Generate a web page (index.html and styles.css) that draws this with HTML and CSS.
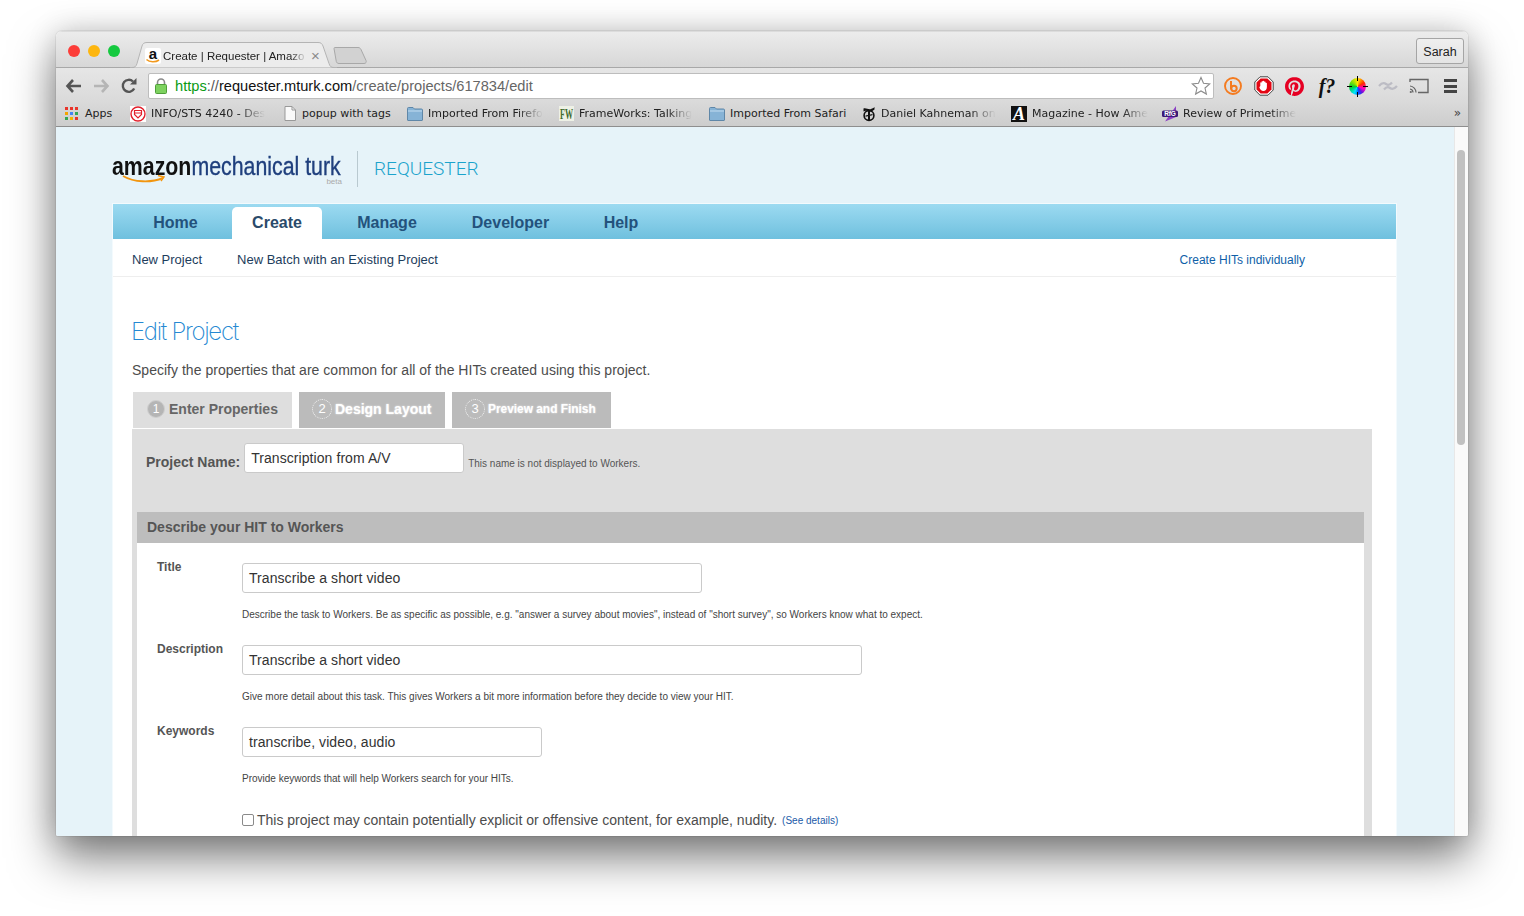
FILE: index.html
```html
<!DOCTYPE html>
<html lang="en">
<head>
<meta charset="utf-8">
<title>Create | Requester | Amazon Mechanical Turk</title>
<link rel="stylesheet" href="styles.css">
</head>
<body>
<div class="window">
  <div class="tabstrip">
    <div class="lights"><i class="light red"></i><i class="light yellow"></i><i class="light green"></i></div>
    <div class="tab">
      <svg class="tab-shape" width="207" height="26" viewBox="0 0 207 26"><path d="M0 25.500h2c3 0 4-1 5-4L12 4c.7-2.400 2-3.500 5-3.500h171c3 0 4 1.100 5 3.500l6 17.500c1 3 2 4 5 4h3" fill="#ececec" stroke="#b4b4b4"/></svg>
      <svg class="favicon" width="16" height="16" viewBox="0 0 16 16"><rect width="16" height="16" rx="2" fill="#fff"/><text x="8" y="11" class="fav-a">a</text><path d="M1.500 11.500c3 2.800 9 3 12.500 .5" fill="none" stroke="#f29a1f" stroke-width="1.600"/></svg>
      <span class="tab-title">Create | Requester | Amazo</span>
      <span class="tab-close">×</span>
    </div>
    <svg class="newtab" width="34" height="17" viewBox="0 0 34 17"><path d="M1 1.500c0-.6.400-1 1-1h23c1.500 0 2.300.7 3 2l5 11c.6 1.500 0 3-2 3H6c-1.500 0-2.300-.7-2.700-2z" fill="#d2d2d2" stroke="#a8a8a8"/></svg>
    <div class="profile">Sarah</div>
  </div>

  <div class="toolbar">
    <svg class="nav-icon nav-back" width="18" height="16" viewBox="0 0 18 16"><path d="M8 2 2.500 8 8 14M3 8h13" fill="none" stroke="#555" stroke-width="2.600"/></svg>
    <svg class="nav-icon" width="18" height="16" viewBox="0 0 18 16"><path d="M10 2l5.500 6-5.500 6M15 8H2" fill="none" stroke="#b5b5b5" stroke-width="2.600"/></svg>
    <svg class="nav-icon" width="18" height="18" viewBox="0 0 18 18"><path d="M14.200 11.500A6 6 0 1 1 13 4.500" fill="none" stroke="#555" stroke-width="2.400"/><path d="M10 7.500h6.500V1z" fill="#555"/></svg>
    <div class="omnibox">
      <svg class="lock" width="14" height="16" viewBox="0 0 14 16"><path d="M3.500 7V4.500a3.500 3.500 0 0 1 7 0V7" fill="none" stroke="#8a8a8a" stroke-width="1.600"/><rect x="1.500" y="6.500" width="11" height="9" rx="1" fill="#7dd25f" stroke="#4f9e3a"/></svg>
      <span class="url"><span class="scheme">https</span><span class="sep">://</span><span class="host">requester.mturk.com</span><span class="path">/create/projects/617834/edit</span></span>
      <svg class="star" width="20" height="20" viewBox="0 0 20 20"><path d="M10 1.500l2.500 5.800 6.200.6-4.700 4.100 1.400 6.100L10 15l-5.400 3.100 1.400-6.100-4.700-4.100 6.200-.6z" fill="#fff" stroke="#8c8c8c" stroke-width="1.100"/></svg>
    </div>
    <div class="ext-icons">
      <svg width="20" height="20" viewBox="0 0 20 20"><circle cx="10" cy="10" r="8" fill="none" stroke="#f47b20" stroke-width="1.900"/><path d="M8 5v8.500" stroke="#f47b20" stroke-width="2"/><circle cx="11" cy="12.500" r="2.700" fill="none" stroke="#f47b20" stroke-width="2"/></svg>
      <svg width="20" height="20" viewBox="0 0 20 20"><path d="M6 .8h8L19.200 6v8L14 19.200H6L.8 14V6z" fill="#fff" stroke="#444"/><path d="M6.600 2.500h6.800l4.100 4.100v6.800l-4.100 4.100H6.600l-4.100-4.100V6.600z" fill="#e30613"/><path d="M6.300 10V6.800c0-.8 1.300-.8 1.300 0V5.700c0-.8 1.300-.8 1.300 0v-.3c0-.8 1.400-.8 1.400 0v.6c0-.8 1.300-.8 1.300 0v1.300c0-.8 1.300-.8 1.300 0V11c0 2.600-1.500 4-3.600 4-1.900 0-2.900-1-4-3.700z" fill="#fff"/></svg>
      <svg width="19" height="19" viewBox="0 0 24 24"><path fill="#e60023" d="M12.017 0C5.396 0 .029 5.367.029 11.987c0 5.079 3.158 9.417 7.618 11.162-.105-.949-.199-2.403.041-3.439.219-.937 1.406-5.957 1.406-5.957s-.359-.72-.359-1.781c0-1.663.967-2.911 2.168-2.911 1.024 0 1.518.769 1.518 1.688 0 1.029-.653 2.567-.992 3.992-.285 1.193.6 2.165 1.775 2.165 2.128 0 3.768-2.245 3.768-5.487 0-2.861-2.063-4.869-5.008-4.869-3.41 0-5.409 2.562-5.409 5.199 0 1.033.394 2.143.889 2.741.099.12.112.225.085.345-.09.375-.293 1.199-.334 1.363-.053.225-.172.271-.401.165-1.495-.69-2.433-2.878-2.433-4.646 0-3.776 2.748-7.252 7.92-7.252 4.158 0 7.392 2.967 7.392 6.923 0 4.135-2.607 7.462-6.233 7.462-1.214 0-2.354-.629-2.758-1.379l-.749 2.848c-.269 1.045-1.004 2.352-1.498 3.146 1.123.345 2.306.535 3.55.535 6.607 0 11.985-5.365 11.985-11.987C23.97 5.39 18.592.026 11.985.026L12.017 0z"/></svg>
      <span class="whatfont">f?</span>
      <span class="wheel"></span>
      <svg width="20" height="14" viewBox="0 0 20 14"><path d="M1 7c3-3.500 5-3.500 7-2s4 1 6-1.500M6 10.500c2-2.500 4-3 6-1.500s4 1.500 7-2" fill="none" stroke="#bcbcc4" stroke-width="2.200"/></svg>
      <svg width="20" height="16" viewBox="0 0 20 16"><path d="M1 4V1.500h18v13H9" fill="none" stroke="#666" stroke-width="1.400"/><path d="M1 8a6.500 6.500 0 0 1 6 6.500M1 11a3.500 3.500 0 0 1 3 3.500" fill="none" stroke="#666" stroke-width="1.200"/><circle cx="1.800" cy="14" r="1.100" fill="#666"/></svg>
      <span class="menu-icon"><i></i><i></i><i></i></span>
    </div>
  </div>

  <div class="bookmarks">
    <div class="bm bm-apps">
      <span class="apps-grid"><i class="c1"></i><i class="c2"></i><i class="c3"></i><i class="c4"></i><i class="c5"></i><i class="c6"></i><i class="c7"></i><i class="c8"></i><i class="c9"></i></span>
      <span>Apps</span>
    </div>
    <div class="bm bm-info">
      <svg width="16" height="16" viewBox="0 0 16 16"><rect width="16" height="16" fill="#fff"/><circle cx="8" cy="8" r="7" fill="none" stroke="#e2202c" stroke-width="1.400"/><path d="M4.500 4.500h7v4L8 12 4.500 8.500z" fill="none" stroke="#e2202c" stroke-width="1.200"/><path d="M5 7h6" stroke="#e2202c"/></svg>
      <span class="bm-fade">INFO/STS 4240 - Des</span>
    </div>
    <div class="bm bm-popup">
      <svg width="12" height="15" viewBox="0 0 12 15"><path d="M1 .5h7l3.500 3.500v10.500H1z" fill="#fafafa" stroke="#999"/><path d="M8 .5V4h3.500" fill="none" stroke="#999"/></svg>
      <span>popup with tags</span>
    </div>
    <div class="bm bm-firefox">
      <svg width="16" height="14" viewBox="0 0 16 14"><path d="M.5 13V1.500c0-.6.400-1 1-1h4.500l1.500 1.500h7c.6 0 1 .4 1 1V13c0 .3-.2.500-.5.500H1c-.3 0-.5-.2-.5-.5z" fill="#86b3d6" stroke="#5f87a8"/><path d="M1 4h14" stroke="#c2dcf0"/></svg>
      <span class="bm-fade">Imported From Firefo</span>
    </div>
    <div class="bm bm-fw">
      <svg width="15" height="15" viewBox="0 0 15 15"><rect width="15" height="15" fill="#eef1e6"/><text x="1" y="12.500" textLength="13" lengthAdjust="spacingAndGlyphs" class="fav-fw">FW</text></svg>
      <span class="bm-fade">FrameWorks: Talking</span>
    </div>
    <div class="bm bm-safari">
      <svg width="16" height="14" viewBox="0 0 16 14"><path d="M.5 13V1.500c0-.6.400-1 1-1h4.500l1.500 1.500h7c.6 0 1 .4 1 1V13c0 .3-.2.500-.5.500H1c-.3 0-.5-.2-.5-.5z" fill="#86b3d6" stroke="#5f87a8"/><path d="M1 4h14" stroke="#c2dcf0"/></svg>
      <span>Imported From Safari</span>
    </div>
    <div class="bm bm-nyt">
      <svg width="14" height="16" viewBox="0 0 14 16"><circle cx="7" cy="9.500" r="4.900" fill="none" stroke="#111" stroke-width="1.600"/><path d="M1.500 2.500C4 1.500 6.500 4 9 3c1.400-.5 2.500-1 3.500-2v2.500C10.500 5.500 8 6 5.500 5 4 4.500 3 4.500 1.500 5.500zM6 5h2v10H6zM3.500 9.500l7-1.500v1.300l-7 1.500z" fill="#111"/></svg>
      <span class="bm-fade">Daniel Kahneman on</span>
    </div>
    <div class="bm bm-atl">
      <span class="atl">A</span>
      <span class="bm-fade">Magazine - How Ame</span>
    </div>
    <div class="bm bm-rfg">
      <svg width="16" height="16" viewBox="0 0 16 16"><path d="M3 15.500 14 0v11z" fill="#8a3fc4"/><rect x="0" y="4.500" width="16" height="6.500" rx="1.500" fill="#3d1a78"/><text x="8" y="10" class="fav-rfg">RfG</text></svg>
      <span class="bm-fade">Review of Primetime</span>
    </div>
    <span class="bm-more">»</span>
  </div>

  <div class="viewport">
    <div class="page">
      <header class="brand">
        <div class="logo">
          <div class="logo-words"><span class="logo-amazon">amazon</span><span class="logo-mturk">mechanical turk</span></div>
          <svg class="smile" width="44" height="10" viewBox="0 0 44 10"><path d="M1 1c11 6.500 28 7 40 2" fill="none" stroke="#f2950f" stroke-width="1.900"/><path d="M36 .5l6 1.500-3 4" fill="none" stroke="#f2950f" stroke-width="1.400"/></svg>
          <span class="logo-beta">beta</span>
        </div>
        <div class="brand-rule"></div>
        <div class="brand-name">REQUESTER</div>
      </header>

      <main class="card">
        <nav class="mainnav">
          <a class="navitem nav-home">Home</a>
          <a class="navitem nav-create">Create</a>
          <a class="navitem nav-manage">Manage</a>
          <a class="navitem nav-dev">Developer</a>
          <a class="navitem nav-help">Help</a>
        </nav>
        <div class="subnav">
          <a class="sub-link">New Project</a>
          <a class="sub-link">New Batch with an Existing Project</a>
          <a class="sub-right">Create HITs individually</a>
        </div>
        <div class="content">
          <h1 class="title">Edit Project</h1>
          <p class="lead">Specify the properties that are common for all of the HITs created using this project.</p>
          <div class="steps">
            <div class="step step-one"><span class="num num-solid">1</span><span>Enter Properties</span></div>
            <div class="step step-two"><span class="num num-ring">2</span><span>Design Layout</span></div>
            <div class="step step-three"><span class="num num-ring">3</span><span>Preview and Finish</span></div>
          </div>
          <section class="panel">
            <div class="name-row">
              <label class="name-label">Project Name:</label>
              <div class="input input-name">Transcription from A/V</div>
              <span class="name-hint">This name is not displayed to Workers.</span>
            </div>
            <div class="section-head">Describe your HIT to Workers</div>
            <div class="section-body">
              <div class="field">
                <div class="field-label">Title</div>
                <div class="field-main">
                  <div class="input input-title">Transcribe a short video</div>
                  <p class="hint">Describe the task to Workers. Be as specific as possible, e.g. "answer a survey about movies", instead of "short survey", so Workers know what to expect.</p>
                </div>
              </div>
              <div class="field">
                <div class="field-label">Description</div>
                <div class="field-main">
                  <div class="input input-desc">Transcribe a short video</div>
                  <p class="hint">Give more detail about this task. This gives Workers a bit more information before they decide to view your HIT.</p>
                </div>
              </div>
              <div class="field">
                <div class="field-label">Keywords</div>
                <div class="field-main">
                  <div class="input input-keys">transcribe, video, audio</div>
                  <p class="hint">Provide keywords that will help Workers search for your HITs.</p>
                </div>
              </div>
              <div class="adult">
                <span class="checkbox"></span>
                <span class="adult-text">This project may contain potentially explicit or offensive content, for example, nudity.</span>
                <a class="details">(See details)</a>
              </div>
            </div>
          </section>
        </div>
      </main>
    </div>
    <div class="scrollbar"><div class="thumb"></div></div>
  </div>
</div>
</body>
</html>
```
FILE: styles.css
```css
* { box-sizing: border-box; }
html, body { height: 100%; }
body {
  margin: 0;
  padding: 31px 56px 0;
  background: #fff;
  overflow: hidden;
  font-family: "Liberation Sans", Arial, sans-serif;
}
p, h1 { margin: 0; }

.window {
  width: 1412px;
  height: 805px;
  display: flex;
  flex-direction: column;
  border-radius: 6px 6px 2px 2px;
  overflow: hidden;
  box-shadow: 0 0 0 1px rgba(0,0,0,.06), 0 22px 45px rgba(0,0,0,.5), 0 0 30px rgba(0,0,0,.16);
}

/* tab strip */
.tabstrip {
  height: 37px;
  flex: none;
  position: relative;
  display: flex;
  align-items: flex-end;
  padding-left: 12px;
  background: linear-gradient(#ececec, #d7d7d7);
  border-top: 1px solid #dcdcdc;
  border-bottom: 1px solid #a8a8a8;
}
.lights { display: flex; gap: 8px; align-self: flex-start; margin-top: 13px; }
.light { width: 12px; height: 12px; border-radius: 50%; display: block; }
.red { background: #fc3d39; }
.yellow { background: #fdb60f; }
.green { background: #15c93f; }
.tab {
  width: 207px;
  height: 26px;
  margin-left: 10px;
  margin-bottom: -1px;
  position: relative;
  display: flex;
  align-items: center;
  padding: 1px 0 0 15px;
  flex: none;
}
.tab-shape { position: absolute; left: 0; top: 0; }
.favicon, .tab-title, .tab-close { position: relative; flex: none; }
.fav-a { font: bold 15px "Liberation Sans", sans-serif; text-anchor: middle; fill: #111; }
.tab-title {
  width: 144px;
  margin-left: 2px;
  white-space: nowrap;
  font-size: 11.500px;
  color: #222;
  -webkit-mask-image: linear-gradient(90deg, #000 88%, transparent 100%);
  mask-image: linear-gradient(90deg, #000 88%, transparent 100%);
}
.tab-close { margin-left: 4px; font-size: 15px; line-height: 1; color: #8a8a8a; }
.newtab { margin-left: -4px; margin-bottom: 3px; flex: none; }
.profile {
  position: absolute;
  right: 4px;
  top: 6px;
  width: 48px;
  height: 26px;
  border: 1px solid #a5a5a5;
  border-radius: 3px;
  background: linear-gradient(#efefef, #e4e4e4);
  font-size: 12.500px;
  line-height: 26px;
  text-align: center;
  color: #222;
}

/* toolbar */
.toolbar {
  height: 33px;
  flex: none;
  display: flex;
  align-items: center;
  padding: 3px 0 0 8px;
  background: linear-gradient(#e6e6e6, #dadada);
}
.nav-icon { flex: none; margin-right: 10px; }
.nav-back { margin-left: 1px; margin-right: 9px; }
.omnibox {
  width: 1066px;
  height: 26px;
  flex: none;
  display: flex;
  align-items: center;
  padding-left: 5px;
  background: #fff;
  border: 1px solid #bdbdbd;
  border-radius: 2px;
}
.lock { flex: none; }
.url { flex: 1; margin-left: 7px; font-size: 14.630px; white-space: nowrap; }
.scheme { color: #0a9b13; }
.sep { color: #555; }
.host { color: #111; }
.path { color: #666; }
.star { flex: none; margin-right: 2px; }
.ext-icons {
  flex: none;
  display: grid;
  grid-template-columns: repeat(8, 31px);
  justify-items: center;
  align-items: center;
  padding-left: 3px;
}
.whatfont { font: italic bold 20px "Liberation Serif", serif; color: #111; margin-left: 3px; }
.wheel {
  width: 17px;
  height: 17px;
  margin-left: 2px;
  position: relative;
  border-radius: 50%;
  background: conic-gradient(#ffe600, #ff2a00 60deg, #ff00c8 110deg, #5a18e0 145deg, #0050ff 170deg, #00e5ff 205deg, #00d030 265deg, #a0e000 320deg, #ffe600);
}
.wheel::before { content: ""; position: absolute; left: 8px; top: -2px; width: 1px; height: 21px; background: linear-gradient(#000 5px, transparent 5px, transparent 16px, #000 16px); }
.wheel::after { content: ""; position: absolute; top: 8px; left: -2px; height: 1px; width: 21px; background: linear-gradient(90deg, #000 5px, transparent 5px, transparent 16px, #000 16px); }
.menu-icon { width: 13px; margin-left: 2px; display: flex; flex-direction: column; gap: 2.500px; }
.menu-icon i { display: block; height: 3px; background: #444; }

/* bookmarks */
.bookmarks {
  height: 26px;
  flex: none;
  position: relative;
  display: flex;
  align-items: center;
  padding-left: 9px;
  background: linear-gradient(#dadada, #cdcdcd);
  border-bottom: 1px solid #8e8e8e;
  font: 11px "DejaVu Sans", sans-serif;
  color: #222;
}
.bm { flex: none; display: flex; align-items: center; gap: 5px; white-space: nowrap; }
.bm svg { flex: none; }
.bm-fade {
  -webkit-mask-image: linear-gradient(90deg, #000 78%, transparent 100%);
  mask-image: linear-gradient(90deg, #000 78%, transparent 100%);
}
.bm-apps { width: 65px; gap: 7px; }
.apps-grid { width: 13px; display: grid; grid-template-columns: repeat(3, 3px); gap: 2px; flex: none; }
.apps-grid i { display: block; height: 3px; }
.c1 { background: #e8352b; } .c2 { background: #e8352b; } .c3 { background: #e8352b; }
.c4 { background: #f4a400; } .c5 { background: #4285f4; } .c6 { background: #34a853; }
.c7 { background: #34a853; } .c8 { background: #f4b400; } .c9 { background: #e8352b; }
.bm-info { width: 154px; }
.bm-popup { width: 123px; gap: 6px; }
.bm-firefox { width: 152px; }
.bm-fw { width: 150px; }
.bm-safari { width: 153px; }
.bm-nyt { width: 149px; }
.bm-atl { width: 151px; }
.atl { width: 16px; height: 16px; overflow: hidden; background: #111; color: #fff; font: italic bold 18px/17px "Liberation Serif", serif; text-align: center; flex: none; }
.fav-fw { font: bold 14px "Liberation Serif", serif; fill: #3f6b2c; }
.fav-rfg { font: bold 6.500px "Liberation Sans", sans-serif; text-anchor: middle; fill: #fff; letter-spacing: -.2px; }
.bm-more { position: absolute; right: 7px; top: 5px; font-size: 12px; color: #444; }

/* viewport */
.viewport {
  flex: 1;
  min-height: 0;
  display: flex;
  overflow: hidden;
}
.page {
  flex: 1;
  min-width: 0;
  padding: 15px 58px 0 57px;
  background: #e6f3f9;
  overflow: hidden;
}
.scrollbar {
  width: 14px;
  flex: none;
  padding: 23px 2px 0;
  background: #fafafa;
  border-left: 1px solid #e8e8e8;
}
.thumb { height: 295px; width: 8px; border-radius: 4px; background: #c1c1c1; }

/* brand */
.brand { height: 53px; display: flex; align-items: center; }
.logo { width: 230px; height: 38px; margin-left: -1px; position: relative; flex: none; }
.logo-words { display: flex; align-items: baseline; white-space: nowrap; font-size: 26px; line-height: 32px; transform: scaleX(.82); transform-origin: left; }
.logo-amazon { font-weight: bold; color: #111; }
.logo-mturk { color: #1f3f7d; -webkit-text-stroke: .35px #1f3f7d; }
.smile { position: absolute; left: 10px; top: 25px; }
.logo-beta { position: absolute; right: 0; top: 27px; font-size: 8px; color: #aaa; }
.brand-rule { width: 1px; height: 36px; margin-left: 15px; background: #b9c9d0; }
.brand-name { margin-left: 16px; font-family: Roboto, sans-serif; font-weight: 300; font-size: 19px; color: #1ba3cc; }

/* card */
.card {
  margin-top: 9px;
  background: #fff;
  box-shadow: 0 0 0 1px #f3fafd;
  height: 640px;
  overflow: hidden;
}
.mainnav {
  height: 35px;
  display: flex;
  align-items: flex-end;
  background: linear-gradient(#9cdaf1, #6fc0de);
}
.navitem {
  height: 32px;
  font-size: 16px;
  font-weight: bold;
  line-height: 31px;
  color: #23527c;
  text-align: center;
}
.nav-home { width: 119px; padding-left: 6px; }
.nav-create { width: 90px; background: #fff; border-radius: 5px 5px 0 0; color: #2a4a6a; }
.nav-manage { width: 130px; }
.nav-dev { width: 117px; }
.nav-help { width: 104px; }
.subnav {
  height: 38px;
  display: flex;
  align-items: center;
  padding: 3px 91px 0 19px;
  border-bottom: 1px solid #eeeeee;
  font-size: 13px;
}
.sub-link { color: #1d3d5c; margin-right: 35px; }
.sub-right { margin: 1px 0 0 auto; color: #0f5fa8; font-size: 12px; }

.content { padding: 40px 24px 0 19px; }
.title {
  font-family: "Inter", sans-serif;
  font-size: 24px;
  font-weight: 200;
  line-height: 30px;
  letter-spacing: -1.300px;
  color: #2588d2;
  margin-left: -1px;
}
.lead { margin-top: 14px; font-size: 14px; line-height: 18px; color: #4c4c4c; letter-spacing: .02px; }

.steps { display: flex; gap: 7px; margin: 13px 0 1px 1px; }
.step {
  height: 36px;
  padding-bottom: 2px;
  display: flex;
  align-items: center;
  font-weight: bold;
  font-size: 14px;
  color: #fff;
  background: #bbb;
}
.step-one { width: 159px; padding-left: 14px; background: #dedede; color: #666; }
.step-two { width: 146px; padding-left: 13px; text-shadow: 0 0 2px rgba(255,255,255,.8); }
.step-three { width: 159px; padding-left: 13px; font-size: 11.900px; text-shadow: 0 0 2px rgba(255,255,255,.8); }
.num {
  width: 18px;
  height: 18px;
  margin-right: 4px;
  border-radius: 50%;
  font-size: 12px;
  font-weight: normal;
  line-height: 18px;
  text-align: center;
  color: #fff;
  flex: none;
}
.num-solid { background: #b5b5b5; border: 1px solid #cfcfcf; line-height: 16px; }
.num-ring { border: 1px dotted #f2f2f2; line-height: 18px; width: 20px; height: 20px; margin-right: 3px; text-shadow: none; }
.step-two .num-ring, .step-three .num-ring { font-size: 13px; }

.panel { background: #dedede; padding: 14px 8px 0 5px; height: 420px; }
.name-row { display: flex; align-items: center; height: 30px; padding-left: 9px; }
.name-label { font-size: 14px; font-weight: bold; color: #555; margin-top: 8px; white-space: nowrap; }
.name-hint { margin: 10px 0 0 4px; font-size: 10px; color: #555; white-space: nowrap; }
.input {
  height: 30px;
  background: #fff;
  border: 1px solid #cacaca;
  border-radius: 3px;
  padding-left: 6px;
  font-size: 14px;
  line-height: 28px;
  letter-spacing: .07px;
  color: #333;
  white-space: nowrap;
  flex: none;
}
.input-name { width: 220px; margin-left: 4px; }
.input-title { width: 460px; }
.input-desc { width: 620px; }
.input-keys { width: 300px; }

.section-head {
  margin-top: 39px;
  height: 31px;
  padding-left: 10px;
  background: #bdbdbd;
  font-size: 14px;
  font-weight: bold;
  line-height: 31px;
  color: #555;
}
.section-body { background: #fff; padding: 20px 0 0 20px; height: 300px; }
.field { display: flex; height: 82px; }
.field-label { width: 85px; flex: none; font-size: 12px; font-weight: bold; color: #555; line-height: 14px; margin-top: -3px; height: 14px; }
.field-main { flex: 1; }
.hint { margin-top: 16px; font-size: 10px; line-height: 12px; color: #444; white-space: nowrap; }
.adult { display: flex; align-items: center; margin: 1px 0 0 85px; height: 20px; }
.checkbox { width: 12px; height: 12px; border: 1px solid #8a8a8a; border-radius: 2px; background: #fff; flex: none; }
.adult-text { margin-left: 3px; font-size: 14px; color: #4c4c4c; white-space: nowrap; }
.details { margin-left: 5px; font-size: 10px; color: #1a5aa8; white-space: nowrap; }
```
